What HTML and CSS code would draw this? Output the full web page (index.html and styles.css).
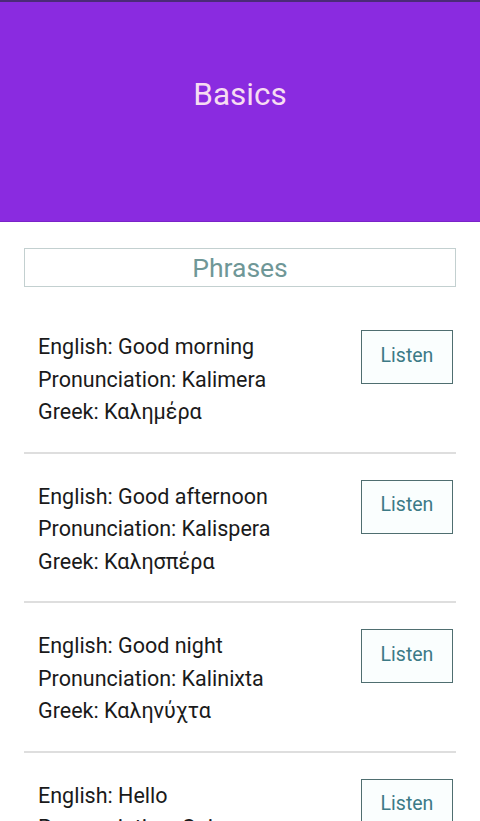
FILE: index.html
```html
<!DOCTYPE html>
<html>
<head>
<meta charset="utf-8">
<link rel="stylesheet" href="styles.css">
</head>
<body>
<div class="topline"></div>
<header class="header"><h1 class="title">Basics</h1></header>
<main class="content">
  <div class="section">Phrases</div>
  <ul class="list">
    <li class="row">
      <div class="text"><p>English: Good morning</p><p>Pronunciation: Kalimera</p><p>Greek: Καλημέρα</p></div>
      <button class="listen">Listen</button>
    </li>
    <li class="row">
      <div class="text"><p>English: Good afternoon</p><p>Pronunciation: Kalispera</p><p>Greek: Καλησπέρα</p></div>
      <button class="listen">Listen</button>
    </li>
    <li class="row">
      <div class="text"><p>English: Good night</p><p>Pronunciation: Kalinixta</p><p>Greek: Καληνύχτα</p></div>
      <button class="listen">Listen</button>
    </li>
    <li class="row">
      <div class="text"><p>English: Hello</p><p>Pronunciation: Geia sou</p><p>Greek: Γεια σου</p></div>
      <button class="listen">Listen</button>
    </li>
  </ul>
</main>
</body>
</html>
```
FILE: styles.css
```css
html, body {
  margin: 0;
  padding: 0;
  background: #ffffff;
  font-family: Roboto, "Noto Sans", sans-serif;
  width: 480px;
  height: 821px;
  overflow: hidden;
}
.topline {
  height: 2px;
  background: #4b2a78;
}
.header {
  height: 219px;
  background: #8a2be0;
  border-bottom: 1px solid #7a22c8;
  display: flex;
  align-items: center;
  justify-content: center;
}
.title {
  margin: 0;
  margin-top: -34px;
  font-weight: 400;
  font-size: 31.5px;
  color: #f6dcf2;
}
.content {
  padding: 26px 24px 0;
}
.section {
  height: 37px;
  border: 1px solid #c3d0d0;
  display: flex;
  align-items: center;
  justify-content: center;
  font-size: 26.5px;
  color: #6f9797;
}
.list {
  list-style: none;
  margin: 17px 0 0;
  padding: 0;
}
.row {
  display: flex;
  justify-content: space-between;
  align-items: flex-start;
  padding: 27px 3px 22px 14px;
  border-bottom: 2px solid #dedede;
}
.text p {
  margin: 0;
  font-size: 21.5px;
  line-height: 32.5px;
  color: #1a1a1a;
}
.text {
  padding-bottom: 1px;
}
.listen {
  width: 92px;
  height: 54px;
  margin-top: -1px;
  background: #fafefe;
  border: 1.5px solid #4f6e70;
  border-radius: 0;
  font-family: Roboto, "Noto Sans", sans-serif;
  font-size: 19.5px;
  color: #3c7a86;
  padding: 0 0 4px;
}
```
